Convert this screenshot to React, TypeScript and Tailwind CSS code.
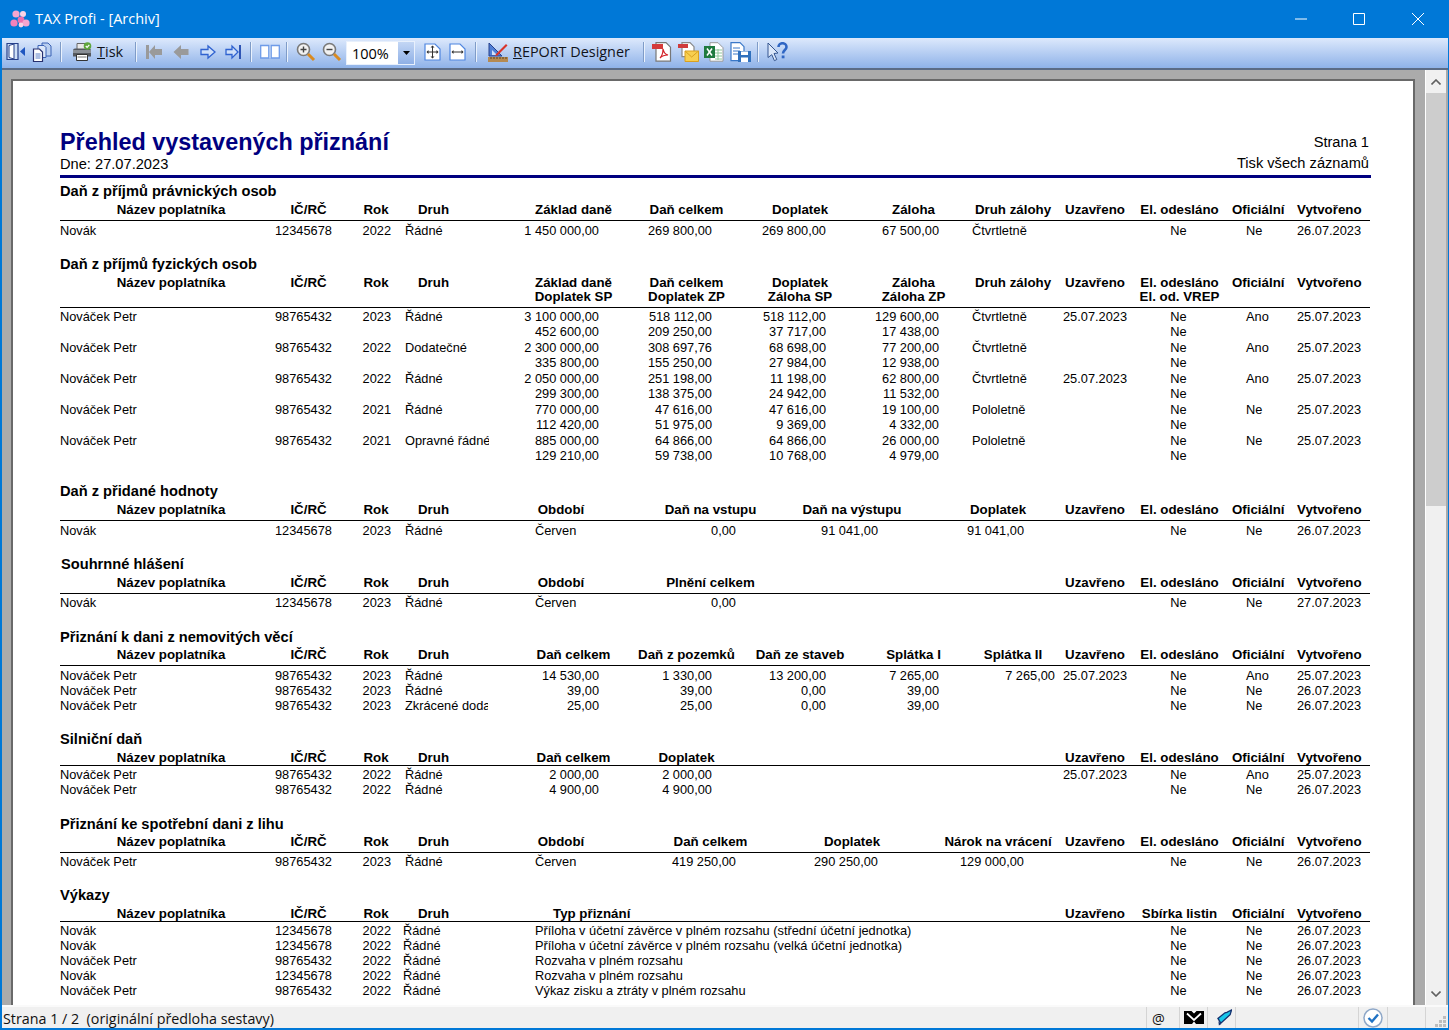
import type { ReactNode } from 'react';

const uiFont = 'font-["Open_Sans","Noto_Sans",sans-serif]';

function Sep({ className = '' }: { className?: string }) {
  return <div className={`h-[20px] w-[2px] shrink-0 bg-[#eaf2fd] border-l border-[#7f9cc8] ${className}`} />;
}

function AppIcon() {
  return (
    <svg viewBox="0 0 20 18" className="w-[20px] h-[18px] shrink-0">
      <circle cx="6" cy="4" r="3.6" fill="#f6a6cf" />
      <circle cx="13" cy="4" r="3" fill="#fbd3e6" />
      <circle cx="4" cy="13" r="3.6" fill="#f283bb" />
      <circle cx="11" cy="10" r="3.4" fill="#ee6fae" />
      <circle cx="16" cy="13" r="3.6" fill="#f6a6cf" />
      <circle cx="11" cy="15" r="2.4" fill="#fbd3e6" />
    </svg>
  );
}

function Toolbar() {
  return (
    <div className="h-[32px] shrink-0 flex items-center pl-[4px] pb-[3px] bg-gradient-to-b from-[#dde9fc] to-[#8fb2e8] border-b-2 border-[#5b6b85]">
      {/* door */}
      <svg viewBox="0 0 20 20" className="w-[20px] h-[20px] shrink-0">
        <path d="M1 1.500h11v16H1z" fill="#cfe0f7" stroke="#27408b" strokeWidth="1.200" />
        <path d="M3 3.500l5-1.500v15l-5-1.500z" fill="#fff" stroke="#27408b" />
        <path d="M19 5v9l-5-4.500z" fill="#1f56c0" />
      </svg>
      {/* copies */}
      <svg viewBox="0 0 20 20" className="w-[20px] h-[20px] ml-[6px] shrink-0">
        <path d="M10 1h6l3 3v10h-9z" fill="#b9cff0" stroke="#3b62b5" />
        <path d="M6 3.500h6l2 2v10H6z" fill="#dbe7f9" stroke="#3b62b5" />
        <path d="M1.500 7h6l3 3v9.500h-9z" fill="#fff" stroke="#27306f" strokeWidth="1.200" />
        <path d="M3.500 12h5M3.500 14h5M3.500 16h5" stroke="#5a7ec5" />
      </svg>
      <Sep className="ml-[8px]" />
      {/* printer */}
      <svg viewBox="0 0 20 20" className="w-[20px] h-[20px] ml-[10px] shrink-0">
        <path d="M5 1.500h9v7H5z" fill="#e8e8e8" stroke="#666" />
        <path d="M1 8.500a2 2 0 0 1 2-2h14a2 2 0 0 1 2 2v6H1z" fill="#55595f" />
        <path d="M1 8h18v3H1z" fill="#8b9097" />
        <path d="M4.500 12.500h11v6h-11z" fill="#fff" stroke="#333" />
        <path d="M5.500 15h9" stroke="#777" />
        <circle cx="15.500" cy="4" r="3.800" fill="#5fa63c" />
        <path d="M13.800 4l1.300 1.300 2.200-2.500" fill="none" stroke="#fff" strokeWidth="1.200" />
      </svg>
      <span className={`${uiFont} ml-[5px] mt-[1px] w-[38px] shrink-0 text-[14.500px] leading-none text-[#10131a]`}>
        <span className="underline">T</span>isk
      </span>
      <Sep />
      {/* first */}
      <svg viewBox="0 0 18 16" className="w-[18px] h-[16px] ml-[8px] shrink-0">
        <path d="M1 1h3v14H1z M17 5v6h-7v4L4 8l6-7v4z" fill="#9a9a9a" />
      </svg>
      {/* prev */}
      <svg viewBox="0 0 16 16" className="w-[16px] h-[16px] ml-[10px] shrink-0">
        <path d="M15.500 5v6H8v4L.5 8 8 1v4z" fill="#9a9a9a" />
      </svg>
      {/* next */}
      <svg viewBox="0 0 16 16" className="w-[16px] h-[16px] ml-[11px] shrink-0">
        <path d="M1 5.500v5h7v3.500L15 8 8 2v3.500z" fill="#cfe0f9" stroke="#2f62d0" strokeWidth="1.300" />
      </svg>
      {/* last */}
      <svg viewBox="0 0 17 16" className="w-[17px] h-[16px] ml-[9px] shrink-0">
        <path d="M1 5.500v5h6v3.500L13 8 7 2v3.500z" fill="#cfe0f9" stroke="#2f62d0" strokeWidth="1.300" />
        <path d="M14 1h2v14h-2z" fill="#2f55b5" />
      </svg>
      <Sep className="ml-[8px]" />
      {/* book */}
      <svg viewBox="0 0 20 15" className="w-[20px] h-[15px] ml-[8px] shrink-0">
        <path d="M.7 1.500h8.100v12.500H.7zM11.200 1.500h8.100v12.500h-8.100z" fill="#fff" stroke="#6e9be8" strokeWidth="1.300" />
        <path d="M9 1.500h2v12.500H9z" fill="#a9c4f0" />
      </svg>
      <Sep className="ml-[6px]" />
      {/* zoom in */}
      <svg viewBox="0 0 20 20" className="w-[20px] h-[20px] ml-[8px] shrink-0">
        <circle cx="7.500" cy="7.500" r="6" fill="#f2f2f2" stroke="#7a7a7a" strokeWidth="1.600" />
        <path d="M4.500 7.500h6M7.500 4.500v6" stroke="#444" strokeWidth="1.400" />
        <path d="M12 12l6 6" stroke="#d98a1f" strokeWidth="3" />
      </svg>
      {/* zoom out */}
      <svg viewBox="0 0 20 20" className="w-[20px] h-[20px] ml-[6px] shrink-0">
        <circle cx="7.500" cy="7.500" r="6" fill="#f2f2f2" stroke="#7a7a7a" strokeWidth="1.600" />
        <path d="M4.500 7.500h6" stroke="#444" strokeWidth="1.400" />
        <path d="M12 12l6 6" stroke="#d98a1f" strokeWidth="3" />
      </svg>
      {/* zoom combo */}
      <div className="ml-[4px] mt-[3px] w-[69px] h-[24px] shrink-0 flex bg-white border border-[#e8f0fc]">
        <span className={`${uiFont} flex-1 pl-[5px] text-[14.500px] leading-[24px] text-black`}>100%</span>
        <span className="w-[16px] flex items-center justify-center bg-gradient-to-b from-[#c3d6f4] to-[#8fb0e6]">
          <svg viewBox="0 0 7 4" className="w-[7px] h-[4px]">
            <path d="M0 0h7L3.500 4z" fill="#000" />
          </svg>
        </span>
      </div>
      {/* fit page */}
      <svg viewBox="0 0 17 18" className="w-[17px] h-[18px] ml-[9px] shrink-0">
        <path d="M1 1h10l5 5v11H1z" fill="#fff" stroke="#4f86e0" strokeWidth="1.200" />
        <path d="M8.500 3v12M3 9h11" stroke="#333" />
        <path d="M8.500 2.500l-2 2h4zM8.500 15.500l-2-2h4zM2.500 9l2-2v4zM14.500 9l-2-2v4z" fill="#333" />
      </svg>
      {/* fit width */}
      <svg viewBox="0 0 17 18" className="w-[17px] h-[18px] ml-[8px] shrink-0">
        <path d="M1 1h10l5 5v11H1z" fill="#fff" stroke="#4f86e0" strokeWidth="1.200" />
        <path d="M3 9h11" stroke="#333" />
        <path d="M2.500 9l2-2v4zM14.500 9l-2-2v4z" fill="#333" />
      </svg>
      <Sep className="ml-[9px]" />
      {/* designer */}
      <svg viewBox="0 0 20 20" className="w-[20px] h-[20px] ml-[11px] shrink-0">
        <path d="M1 1l13 13H1z" fill="#4f7fd6" stroke="#27408b" />
        <path d="M4 8l5 5H4z" fill="#cfe0f9" />
        <path d="M8 12L18 2l1.500 1.500-10 10-2.500.5z" fill="#d9342b" />
        <path d="M0 15h20v5H0z" fill="#b58a52" />
        <path d="M3 15v2M6 15v2M9 15v2M12 15v2M15 15v2M18 15v2" stroke="#5c4420" />
      </svg>
      <span className={`${uiFont} ml-[5px] mt-[1px] w-[130px] shrink-0 text-[14.400px] leading-none whitespace-nowrap text-[#10131a]`}>
        <span className="underline">R</span>EPORT Designer
      </span>
      <Sep />
      {/* pdf */}
      <svg viewBox="0 0 20 20" className="w-[20px] h-[20px] ml-[7px] shrink-0">
        <path d="M4 .7h10l4.500 4.500v14H4z" fill="#fff" stroke="#777" strokeWidth="1.200" />
        <path d="M0 2h11v5H0z" fill="#d43a3a" />
        <path d="M8 16c2-2 3-6 3-9 1 4 2 5 5 6-3 0-6 1-8 3z" fill="none" stroke="#d3232a" strokeWidth="1.200" />
      </svg>
      {/* pdf mail */}
      <svg viewBox="0 0 21 20" className="w-[21px] h-[20px] ml-[6px] shrink-0">
        <path d="M4 .7h8l4 4v10H4z" fill="#fff" stroke="#888" strokeWidth="1.200" />
        <path d="M0 2h10v4H0z" fill="#cf3b3b" />
        <path d="M7 9h13.500v10.500H7z" fill="#f8cf4f" stroke="#d9a020" />
        <path d="M7 9l6.700 6L20.500 9" fill="none" stroke="#d9a020" />
      </svg>
      {/* excel */}
      <svg viewBox="0 0 20 20" className="w-[20px] h-[20px] ml-[5px] shrink-0">
        <path d="M6 .7h8l5 5v13.500H6z" fill="#fff" stroke="#999" />
        <path d="M11 8h7M11 11h7M11 14h7M11 17h7M14 7v11" stroke="#8fc79a" />
        <path d="M0 4h11v12H0z" fill="#1f7a3e" />
        <path d="M3 6.500l5 7M8 6.500l-5 7" stroke="#fff" strokeWidth="1.500" />
      </svg>
      {/* export */}
      <svg viewBox="0 0 21 20" className="w-[21px] h-[20px] ml-[6px] shrink-0">
        <path d="M1 .7h9l4 4v14H1z" fill="#fff" stroke="#3a78c8" strokeWidth="1.200" />
        <path d="M3 6h7M3 9h7M3 12h6" stroke="#3a78c8" />
        <path d="M8 9h13v11H8z" fill="#2f70bd" />
        <path d="M11 9.500h7v3.500h-7zM11 15.500h7v4.500h-7z" fill="#fff" />
      </svg>
      <Sep className="ml-[6px]" />
      {/* help */}
      <svg viewBox="0 0 21 20" className="w-[21px] h-[20px] ml-[8px] shrink-0">
        <path d="M1 1l10 10-4 .5 2.800 6-2.400 1.200-2.600-6L1 15.500z" fill="#dce8fa" stroke="#34558f" />
        <path d="M11.500 5c0-5 8-5 8 0 0 3-3.500 3-3.500 6.500" fill="none" stroke="#2f66c4" strokeWidth="2.600" />
        <path d="M14.700 13.500h2.800v2.800h-2.800z" fill="#2f66c4" />
      </svg>
    </div>
  );
}

function Heading({ children, className = 'h-[18px]' }: { children: ReactNode; className?: string }) {
  return <div className={`leading-[18px] text-[14.650px] font-bold whitespace-nowrap ${className}`}>{children}</div>;
}

function Head({
  children,
  el = 'El. odesláno',
  el2,
  className = 'pb-[3px]',
}: {
  children: ReactNode;
  el?: string;
  el2?: string;
  className?: string;
}) {
  return (
    <div className={`flex pt-[3px] border-b border-black font-bold leading-[14px] text-[13.300px] whitespace-nowrap ${className}`}>
      <div className="w-[222px] text-center">Název poplatníka</div>
      <div className="w-[53px] text-center">IČ/RČ</div>
      <div className="w-[82px] text-center">Rok</div>
      <div className="w-[71px] pl-[1px]">Druh</div>
      <div className="w-[575px] flex">{children}</div>
      <div className="w-[64px] text-center">Uzavřeno</div>
      <div className="w-[105px] text-center">
        {el}
        {el2 && <div>{el2}</div>}
      </div>
      <div className="w-[50px] text-center">Oficiální</div>
      <div className="w-[64px] ml-[15px] text-center">Vytvořeno</div>
    </div>
  );
}

// záhlaví se sloupci jako u daně z příjmů
function HeadCols({ a, b, c, d, e }: { a: ReactNode; b: ReactNode; c?: ReactNode; d?: ReactNode; e?: ReactNode }) {
  return (
    <>
      <div className="ml-[30px] w-[111px] text-center">{a}</div>
      <div className="w-[115px] text-center">{b}</div>
      <div className="w-[112px] text-center">{c}</div>
      <div className="w-[115px] text-center">{d}</div>
      <div className="w-[84px] text-center">{e}</div>
    </>
  );
}

// záhlaví pro období (DPH, hlášení, spotřební daň)
function HeadPeriod({ b, c, d }: { b: ReactNode; c?: ReactNode; d?: ReactNode }) {
  return (
    <>
      <div className="w-[146px] text-center">Období</div>
      <div className="w-[153px] text-center">{b}</div>
      <div className="w-[130px] text-center">{c}</div>
      <div className="w-[130px] ml-[16px] text-center">{d}</div>
    </>
  );
}

type RowProps = {
  name?: string;
  ic?: string;
  rok?: string;
  druh?: string;
  druhClass?: string;
  uz?: string;
  el?: string;
  of?: string;
  vy?: string;
  children?: ReactNode;
};

function Row({ name, ic, rok, druh, druhClass = 'w-[83px] ml-[14px]', uz, el, of, vy, children }: RowProps) {
  return (
    <div className="flex h-[15px] leading-[15px] text-[12.800px] whitespace-nowrap">
      <div className="w-[215px]">{name}</div>
      <div className="w-[55px] text-right">{ic}</div>
      <div className="w-[61px] text-right">{rok}</div>
      <div className={`overflow-hidden ${druhClass}`}>{druh}</div>
      <div className="w-[575px] flex">{children}</div>
      <div className="w-[64px] text-center">{uz}</div>
      <div className="w-[103px] text-center">{el}</div>
      <div className="w-[52px] pl-[16px]">{of}</div>
      <div className="w-[64px] ml-[15px] text-center">{vy}</div>
    </div>
  );
}

function Nums({ a, b, c, d, e, f }: { a?: string; b?: string; c?: string; d?: string; e?: string; f?: string }) {
  return (
    <>
      <div className="w-[111px] text-right">{a}</div>
      <div className="w-[113px] text-right">{b}</div>
      <div className="w-[114px] text-right">{c}</div>
      <div className="w-[113px] text-right">{d}</div>
      {f ? <div className="w-[116px] text-right">{f}</div> : <div className="ml-[33px]">{e}</div>}
    </>
  );
}

function Period({ a, b, c, d }: { a?: string; b?: string; c?: string; d?: string }) {
  return (
    <>
      <div className="w-[132px] pl-[47px]">{a}</div>
      <div className="w-[116px] text-right">{b}</div>
      <div className="w-[142px] text-right">{c}</div>
      <div className="w-[146px] text-right">{d}</div>
    </>
  );
}

const P = { name: 'Nováček Petr', ic: '98765432' };
const N = { name: 'Novák', ic: '12345678' };

const fyz = [
  { rok: '2023', druh: 'Řádné', n1: ['3 100 000,00', '518 112,00', '518 112,00', '129 600,00'], e: 'Čtvrtletně', uz: '25.07.2023', of: 'Ano', n2: ['452 600,00', '209 250,00', '37 717,00', '17 438,00'] },
  { rok: '2022', druh: 'Dodatečné', n1: ['2 300 000,00', '308 697,76', '68 698,00', '77 200,00'], e: 'Čtvrtletně', uz: '', of: 'Ano', n2: ['335 800,00', '155 250,00', '27 984,00', '12 938,00'] },
  { rok: '2022', druh: 'Řádné', n1: ['2 050 000,00', '251 198,00', '11 198,00', '62 800,00'], e: 'Čtvrtletně', uz: '25.07.2023', of: 'Ano', n2: ['299 300,00', '138 375,00', '24 942,00', '11 532,00'] },
  { rok: '2021', druh: 'Řádné', n1: ['770 000,00', '47 616,00', '47 616,00', '19 100,00'], e: 'Pololetně', uz: '', of: 'Ne', n2: ['112 420,00', '51 975,00', '9 369,00', '4 332,00'] },
  { rok: '2021', druh: 'Opravné řádné', n1: ['885 000,00', '64 866,00', '64 866,00', '26 000,00'], e: 'Pololetně', uz: '', of: 'Ne', n2: ['129 210,00', '59 738,00', '10 768,00', '4 979,00'] },
];

const vykazy = [
  { ...N, typ: 'Příloha v účetní závěrce v plném rozsahu (střední účetní jednotka)' },
  { ...N, typ: 'Příloha v účetní závěrce v plném rozsahu (velká účetní jednotka)' },
  { ...P, typ: 'Rozvaha v plném rozsahu' },
  { ...N, typ: 'Rozvaha v plném rozsahu' },
  { ...P, typ: 'Výkaz zisku a ztráty v plném rozsahu' },
];

function Report() {
  return (
    <div className='w-[1310px] font-["Liberation_Sans",Arial,sans-serif] text-black'>
      <div className="flex justify-between pt-[47px]">
        <div>
          <div className="h-[28px] leading-[28px] text-[23.400px] font-bold text-[#000080]">Přehled vystavených přiznání</div>
          <div className="h-[16px] leading-[16px] text-[14.650px]">Dne: 27.07.2023</div>
        </div>
        <div className="text-right text-[14.650px] pr-[1px]">
          <div className="h-[22px] leading-[28px]">Strana 1</div>
          <div className="h-[22px] leading-[26px]">Tisk všech záznamů</div>
        </div>
      </div>
      <div className="w-[1311px] h-[3px] mt-[3px] bg-[#000080]" />

      <Heading className="h-[18px] mt-[4px]">Daň z příjmů právnických osob</Heading>
      <Head>
        <HeadCols a="Základ daně" b="Daň celkem" c="Doplatek" d="Záloha" e="Druh zálohy" />
      </Head>
      <div className="pt-[2px]">
        <Row {...N} rok="2022" druh="Řádné" el="Ne" of="Ne" vy="26.07.2023">
          <Nums a="1 450 000,00" b="269 800,00" c="269 800,00" d="67 500,00" e="Čtvrtletně" />
        </Row>
      </div>

      <Heading className="h-[18px] mt-[17px]">Daň z příjmů fyzických osob</Heading>
      <Head el2="El. od. VREP">
        <HeadCols
          a={<>Základ daně<br />Doplatek SP</>}
          b={<>Daň celkem<br />Doplatek ZP</>}
          c={<>Doplatek<br />Záloha SP</>}
          d={<>Záloha<br />Záloha ZP</>}
          e="Druh zálohy"
        />
      </Head>
      <div className="pt-[1px]">
        {fyz.map((r, i) => (
          <div key={i} className="pb-[1px]">
            <Row {...P} rok={r.rok} druh={r.druh} druhClass="w-[84px] -mr-[1px] ml-[14px]" uz={r.uz} el="Ne" of={r.of} vy="25.07.2023">
              <Nums a={r.n1[0]} b={r.n1[1]} c={r.n1[2]} d={r.n1[3]} e={r.e} />
            </Row>
            <Row el="Ne">
              <Nums a={r.n2[0]} b={r.n2[1]} c={r.n2[2]} d={r.n2[3]} />
            </Row>
          </div>
        ))}
      </div>

      <Heading className="h-[18px] mt-[18px]">Daň z přidané hodnoty</Heading>
      <Head>
        <HeadPeriod b="Daň na vstupu" c="Daň na výstupu" d="Doplatek" />
      </Head>
      <div className="pt-[2px]">
        <Row {...N} rok="2023" druh="Řádné" el="Ne" of="Ne" vy="26.07.2023">
          <Period a="Červen" b="0,00" c="91 041,00" d="91 041,00" />
        </Row>
      </div>

      <Heading className="h-[18px] mt-[17px] pl-[1px]">Souhrnné hlášení</Heading>
      <Head>
        <HeadPeriod b="Plnění celkem" />
      </Head>
      <div className="pt-[1px]">
        <Row {...N} rok="2023" druh="Řádné" el="Ne" of="Ne" vy="27.07.2023">
          <Period a="Červen" b="0,00" />
        </Row>
      </div>

      <Heading className="h-[17px] mt-[18px]">Přiznání k dani z nemovitých věcí</Heading>
      <Head>
        <HeadCols a="Daň celkem" b="Daň z pozemků" c="Daň ze staveb" d="Splátka I" e="Splátka II" />
      </Head>
      <div className="pt-[2px]">
        <Row {...P} rok="2023" druh="Řádné" uz="25.07.2023" el="Ne" of="Ano" vy="25.07.2023">
          <Nums a="14 530,00" b="1 330,00" c="13 200,00" d="7 265,00" f="7 265,00" />
        </Row>
        <Row {...P} rok="2023" druh="Řádné" el="Ne" of="Ne" vy="26.07.2023">
          <Nums a="39,00" b="39,00" c="0,00" d="39,00" />
        </Row>
        <Row {...P} rok="2023" druh="Zkrácené dodatečné" el="Ne" of="Ne" vy="26.07.2023">
          <Nums a="25,00" b="25,00" c="0,00" d="39,00" />
        </Row>
      </div>

      <Heading className="h-[18px] mt-[17px]">Silniční daň</Heading>
      <Head className="pb-0">
        <HeadCols a="Daň celkem" b="Doplatek" />
      </Head>
      <div className="pt-[1px]">
        <Row {...P} rok="2022" druh="Řádné" uz="25.07.2023" el="Ne" of="Ano" vy="25.07.2023">
          <Nums a="2 000,00" b="2 000,00" />
        </Row>
        <Row {...P} rok="2022" druh="Řádné" el="Ne" of="Ne" vy="26.07.2023">
          <Nums a="4 900,00" b="4 900,00" />
        </Row>
      </div>

      <Heading className="h-[17px] mt-[18px]">Přiznání ke spotřební dani z lihu</Heading>
      <Head>
        <HeadPeriod b="Daň celkem" c="Doplatek" d="Nárok na vrácení" />
      </Head>
      <div className="pt-[1px]">
        <Row {...P} rok="2023" druh="Řádné" el="Ne" of="Ne" vy="26.07.2023">
          <Period a="Červen" b="419 250,00" c="290 250,00" d="129 000,00" />
        </Row>
      </div>

      <Heading className="h-[18px] mt-[17px]">Výkazy</Heading>
      <Head el="Sbírka listin" className="pb-0">
        <div className="ml-[65px]">Typ přiznání</div>
      </Head>
      <div className="pt-[1px]">
        {vykazy.map((r, i) => (
          <Row key={i} name={r.name} ic={r.ic} rok="2022" druh="Řádné" druhClass="w-[85px] ml-[12px]" el="Ne" of="Ne" vy="26.07.2023">
            <div className="pl-[47px]">{r.typ}</div>
          </Row>
        ))}
      </div>
    </div>
  );
}

function StatusBar() {
  return (
    <div className={`${uiFont} h-[25px] shrink-0 flex bg-[#f0f0f0] border-t-2 border-t-[#fafafa] border-b-2 border-b-[#0078d7] text-[14.300px] leading-[24px] text-[#111]`}>
      <div className="flex-1 pl-[1px] whitespace-pre">Strana 1 / 2  (originální předloha sestavy)</div>
      <div className="w-[33px] pl-[5px] border-l border-[#d4d4d4]">@</div>
      <div className="w-[28px] border-l border-[#d4d4d4] flex items-center justify-center">
        <svg viewBox="0 0 20 13" className="w-[20px] h-[13px]">
          <path d="M0 0h20v13H0z" fill="#000" />
          <path d="M3 2.500l7 6.500 7-6.500" fill="none" stroke="#fff" strokeWidth="1.800" />
          <path d="M7.500 0h5L10 2.500zM8 13l2-2.500 2 2.500z" fill="#fff" />
        </svg>
      </div>
      <div className="w-[28px] pl-[9px] border-l border-[#d4d4d4] flex items-center">
        <svg viewBox="0 0 16 18" className="w-[15px] h-[17px]">
          <path d="M1 10l3 5 10-9 1.500-5-5 2.500-2 .5z" fill="#18c7ea" stroke="#14306f" strokeWidth="1.400" />
          <path d="M2 17.500l2.500-1.500-3-3z" fill="#14306f" />
        </svg>
      </div>
      <div className="w-[123px] border-l border-[#d4d4d4]" />
      <div className="w-[29px] border-l border-[#d4d4d4] flex items-center justify-center">
        <svg viewBox="0 0 20 20" className="w-[20px] h-[20px]">
          <circle cx="10" cy="10" r="9" fill="#fff" stroke="#8fa8c8" strokeWidth="1.500" />
          <path d="M5.500 10l3.500 3.500 6-7" fill="none" stroke="#1f72c4" strokeWidth="2.400" />
        </svg>
      </div>
      <div className="w-[38px] border-l border-[#d4d4d4]" />
      <div className="w-[23px] border-l border-[#d4d4d4] flex items-end justify-end pr-[2px] pb-[1px]">
        <svg viewBox="0 0 11 11" className="w-[11px] h-[11px]">
          <path d="M8 0h3v3H8zM4 4h3v3H4zM8 4h3v3H8zM0 8h3v3H0zM4 8h3v3H4zM8 8h3v3H8z" fill="#bdbdbd" />
        </svg>
      </div>
    </div>
  );
}

export default function App() {
  return (
    <div className="w-[1449px] h-[1030px] flex flex-col overflow-hidden bg-[#0078d7]">
      <div className={`${uiFont} h-[38px] shrink-0 flex items-center pl-[10px] text-white text-[14.500px]`}>
        <AppIcon />
        <span className="ml-[5px]">TAX Profi - [Archiv]</span>
        <div className="ml-auto flex items-center">
          <svg viewBox="0 0 12 2" className="w-[12px] h-[2px] mr-[46px]">
            <path d="M0 1h12" stroke="#fff" />
          </svg>
          <svg viewBox="0 0 12 12" className="w-[12px] h-[12px] mr-[47px]">
            <path d="M.5.5h11v11H.5z" fill="none" stroke="#fff" />
          </svg>
          <svg viewBox="0 0 12 12" className="w-[12px] h-[12px] mr-[25px]">
            <path d="M0 0l12 12M12 0L0 12" stroke="#fff" />
          </svg>
        </div>
      </div>
      <div className="flex-1 min-h-0 flex flex-col ml-[2px] mr-[1px]">
        <Toolbar />
        <div className="flex-1 min-h-0 flex bg-[#ababab]">
          <div className="w-[1404px] ml-[9px] mt-[9px] pl-[47px] bg-white border-2 border-b-0 border-[#696969] overflow-hidden">
            <Report />
          </div>
          <div className="w-[20px] ml-[10px] flex flex-col bg-[#f0f0f0] border-l border-white box-content">
            <div className="h-[23px] flex items-center justify-center">
              <svg viewBox="0 0 10 6" className="w-[10px] h-[6px]">
                <path d="M.5 5.500L5 1l4.500 4.500" fill="none" stroke="#606060" strokeWidth="1.600" />
              </svg>
            </div>
            <div className="h-[413px] bg-[#cdcdcd]" />
            <div className="flex-1" />
            <div className="h-[23px] flex items-center justify-center">
              <svg viewBox="0 0 10 6" className="w-[10px] h-[6px]">
                <path d="M.5.5L5 5l4.500-4.500" fill="none" stroke="#606060" strokeWidth="1.600" />
              </svg>
            </div>
          </div>
        </div>
        <StatusBar />
      </div>
    </div>
  );
}
